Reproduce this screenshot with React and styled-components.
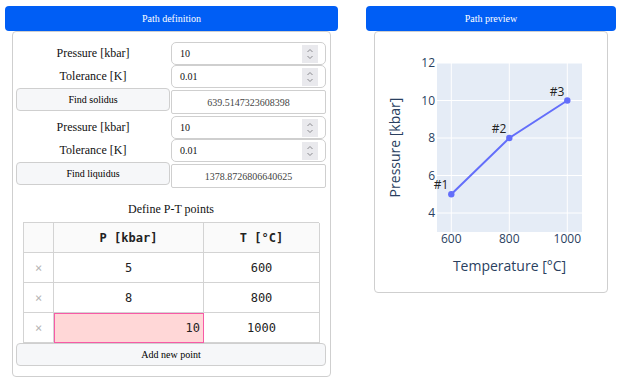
import React from "react";
import styled, { createGlobalStyle } from "styled-components";

const serif = `"Liberation Serif", "Times New Roman", serif`;

const Global = createGlobalStyle`
  html, body { margin: 0; padding: 0; background: #fff; }
  body { font-family: ${serif}; color: #111; }
`;

const Page = styled.div`
  display: flex;
  gap: 28px;
  padding: 6px 0 0 5px;
`;

const Column = styled.div`
  display: flex;
  flex-direction: column;
  width: ${(p) => p.$w}px;
`;

const Header = styled.div`
  height: 25px;
  background: #005ef5;
  border-radius: 4px;
  color: #fff;
  font-family: ${serif};
  font-size: 10px;
  display: flex;
  align-items: center;
  justify-content: center;
`;

const Panel = styled.div`
  margin: 0 ${(p) => p.$mx}px;
  border: 1px solid #cfcfcf;
  border-radius: 4px;
  display: flex;
  flex-direction: column;
  padding: ${(p) => p.$pad};
  ${(p) => (p.$h ? `height: ${p.$h}px;` : "")}
  box-sizing: border-box;
`;

const Section = styled.div`
  display: flex;
  flex-direction: column;
  margin-top: ${(p) => p.$mt || 0}px;
`;

const Row = styled.div`
  display: grid;
  grid-template-columns: 154px 155px;
  column-gap: 1px;
  align-items: start;
`;

const Label = styled.div`
  height: 23px;
  display: flex;
  align-items: center;
  justify-content: center;
  font-family: ${serif};
  font-size: 12px;
  color: #111;
`;

const InputBox = styled.div`
  height: 23px;
  box-sizing: border-box;
  border: 1px solid #cfcfcf;
  border-radius: 5px;
  display: flex;
  align-items: center;
  padding-left: 8px;
  font-family: ${serif};
  font-size: 10px;
  color: #111;
`;

const InputText = styled.span`
  flex: 1;
`;

const Spinner = styled.div`
  width: 16px;
  height: 18px;
  margin-right: 7px;
  background: #e9e9ed;
  display: flex;
  align-items: center;
  justify-content: center;
`;

const Button = styled.div`
  height: 23px;
  box-sizing: border-box;
  border: 1px solid #cfcfcf;
  border-radius: 4px;
  background: #f6f7f9;
  display: flex;
  align-items: center;
  justify-content: center;
  font-family: ${serif};
  font-size: 10px;
  color: #000;
`;

const Output = styled.div`
  height: 24px;
  margin-top: 2px;
  box-sizing: border-box;
  border: 1px solid #cfcfcf;
  border-radius: 2px;
  display: flex;
  align-items: center;
  justify-content: center;
  font-family: ${serif};
  font-size: 10px;
  color: #444;
`;

const Title = styled.div`
  margin-top: 14px;
  height: 14px;
  line-height: 14px;
  text-align: center;
  font-family: ${serif};
  font-size: 12px;
`;

const Table = styled.div`
  margin: 6px 7px 0;
  display: grid;
  grid-template-columns: 30px 150px 116px;
  grid-auto-rows: 30px;
  border-top: 1px solid #d3d3d3;
  border-left: 1px solid #d3d3d3;
`;

const Cell = styled.div`
  box-sizing: border-box;
  border-right: 1px solid #d3d3d3;
  border-bottom: 1px solid #d3d3d3;
  display: flex;
  align-items: center;
  justify-content: ${(p) => (p.$right ? "flex-end" : "center")};
  padding-right: ${(p) => (p.$right ? "3px" : "0")};
  font-family: "DejaVu Sans Mono", "Liberation Mono", monospace;
  font-size: 12px;
  color: #222;
  background: ${(p) => (p.$head ? "#fafafa" : p.$active ? "#ffd7d7" : "#fff")};
  font-weight: ${(p) => (p.$head ? "bold" : "normal")};
  ${(p) => (p.$active ? "outline: 1px solid #f75aa6; outline-offset: -1px; position: relative;" : "")}
`;

const Del = styled(Cell)`
  color: #b5b5b5;
  font-size: 12px;
`;

const WideButton = styled(Button)`
  margin-top: 0;
`;

const Chart = styled.svg`
  display: block;
  font-family: "Open Sans", "Liberation Sans", sans-serif;
`;

function SpinIcon() {
  return (
    <svg width="8" height="14" viewBox="0 0 8 14">
      <path d="M1.5 5 L4 2.5 L6.5 5" fill="none" stroke="#8a8a8f" strokeWidth="1" />
      <path d="M1.5 9 L4 11.5 L6.5 9" fill="none" stroke="#8a8a8f" strokeWidth="1" />
    </svg>
  );
}

function NumField({ label, value }) {
  return (
    <Row>
      <Label>{label}</Label>
      <InputBox>
        <InputText>{value}</InputText>
        <Spinner>
          <SpinIcon />
        </Spinner>
      </InputBox>
    </Row>
  );
}

function FinderBlock({ button, result, mt }) {
  return (
    <Section $mt={mt}>
      <NumField label="Pressure [kbar]" value="10" />
      <NumField label="Tolerance [K]" value="0.01" />
      <Row>
        <Button>{button}</Button>
        <Output>{result}</Output>
      </Row>
    </Section>
  );
}

const points = [
  { p: 5, t: 600 },
  { p: 8, t: 800 },
  { p: 10, t: 1000 },
];

const xOf = (t) => 76.3 + (t - 600) * 0.29;
const yOf = (p) => 31 + (12 - p) * 18.75;

function PathChart() {
  const pts = points.map((d) => [xOf(d.t), yOf(d.p)]);
  const tc = "#2a3f5f";
  return (
    <Chart width="232" height="260" viewBox="0 0 232 260">
      <rect x="62" y="31" width="145" height="169" fill="#e5ecf6" />
      {[600, 800, 1000].map((t) => (
        <line key={t} x1={xOf(t)} x2={xOf(t)} y1="31" y2="200" stroke="#fff" strokeWidth="1" />
      ))}
      {[4, 6, 8, 10, 12].map((p) => (
        <line key={p} x1="62" x2="207" y1={yOf(p)} y2={yOf(p)} stroke="#fff" strokeWidth="1" />
      ))}
      {[4, 6, 8, 10, 12].map((p) => (
        <text key={p} x="60" y={yOf(p) + 4} textAnchor="end" fontSize="12" fill={tc}>
          {p}
        </text>
      ))}
      {[600, 800, 1000].map((t) => (
        <text key={t} x={xOf(t)} y="211" textAnchor="middle" fontSize="12" fill={tc}>
          {t}
        </text>
      ))}
      <polyline
        points={pts.map((q) => q.join(",")).join(" ")}
        fill="none"
        stroke="#636efa"
        strokeWidth="2"
      />
      {pts.map((q, i) => (
        <g key={i}>
          <circle cx={q[0]} cy={q[1]} r="3.2" fill="#636efa" />
          <text x={q[0] - 3} y={q[1] - 5} textAnchor="end" fontSize="12" fill="#222">
            #{i + 1}
          </text>
        </g>
      ))}
      <text x="134.5" y="239" textAnchor="middle" fontSize="14" fill={tc}>
        Temperature [°C]
      </text>
      <text
        transform="translate(25,115.5) rotate(-90)"
        textAnchor="middle"
        fontSize="14"
        fill={tc}
      >
        Pressure [kbar]
      </text>
    </Chart>
  );
}

export default function App() {
  return (
    <>
      <Global />
      <Page>
        <Column $w={333}>
          <Header>Path definition</Header>
          <Panel $mx={7} $pad="10px 4px 10px 3px">
            <FinderBlock button="Find solidus" result="639.5147323608398" />
            <FinderBlock button="Find liquidus" result="1378.8726806640625" mt={2} />
            <Title>Define P-T points</Title>
            <Table>
              <Cell $head />
              <Cell $head>P [kbar]</Cell>
              <Cell $head>T [°C]</Cell>
              <Del>×</Del>
              <Cell>5</Cell>
              <Cell>600</Cell>
              <Del>×</Del>
              <Cell>8</Cell>
              <Cell>800</Cell>
              <Del>×</Del>
              <Cell $active $right>
                10
              </Cell>
              <Cell>1000</Cell>
            </Table>
            <WideButton>Add new point</WideButton>
          </Panel>
        </Column>
        <Column $w={250}>
          <Header>Path preview</Header>
          <Panel $mx={8} $pad="0" $h={262}>
            <PathChart />
          </Panel>
        </Column>
      </Page>
    </>
  );
}
